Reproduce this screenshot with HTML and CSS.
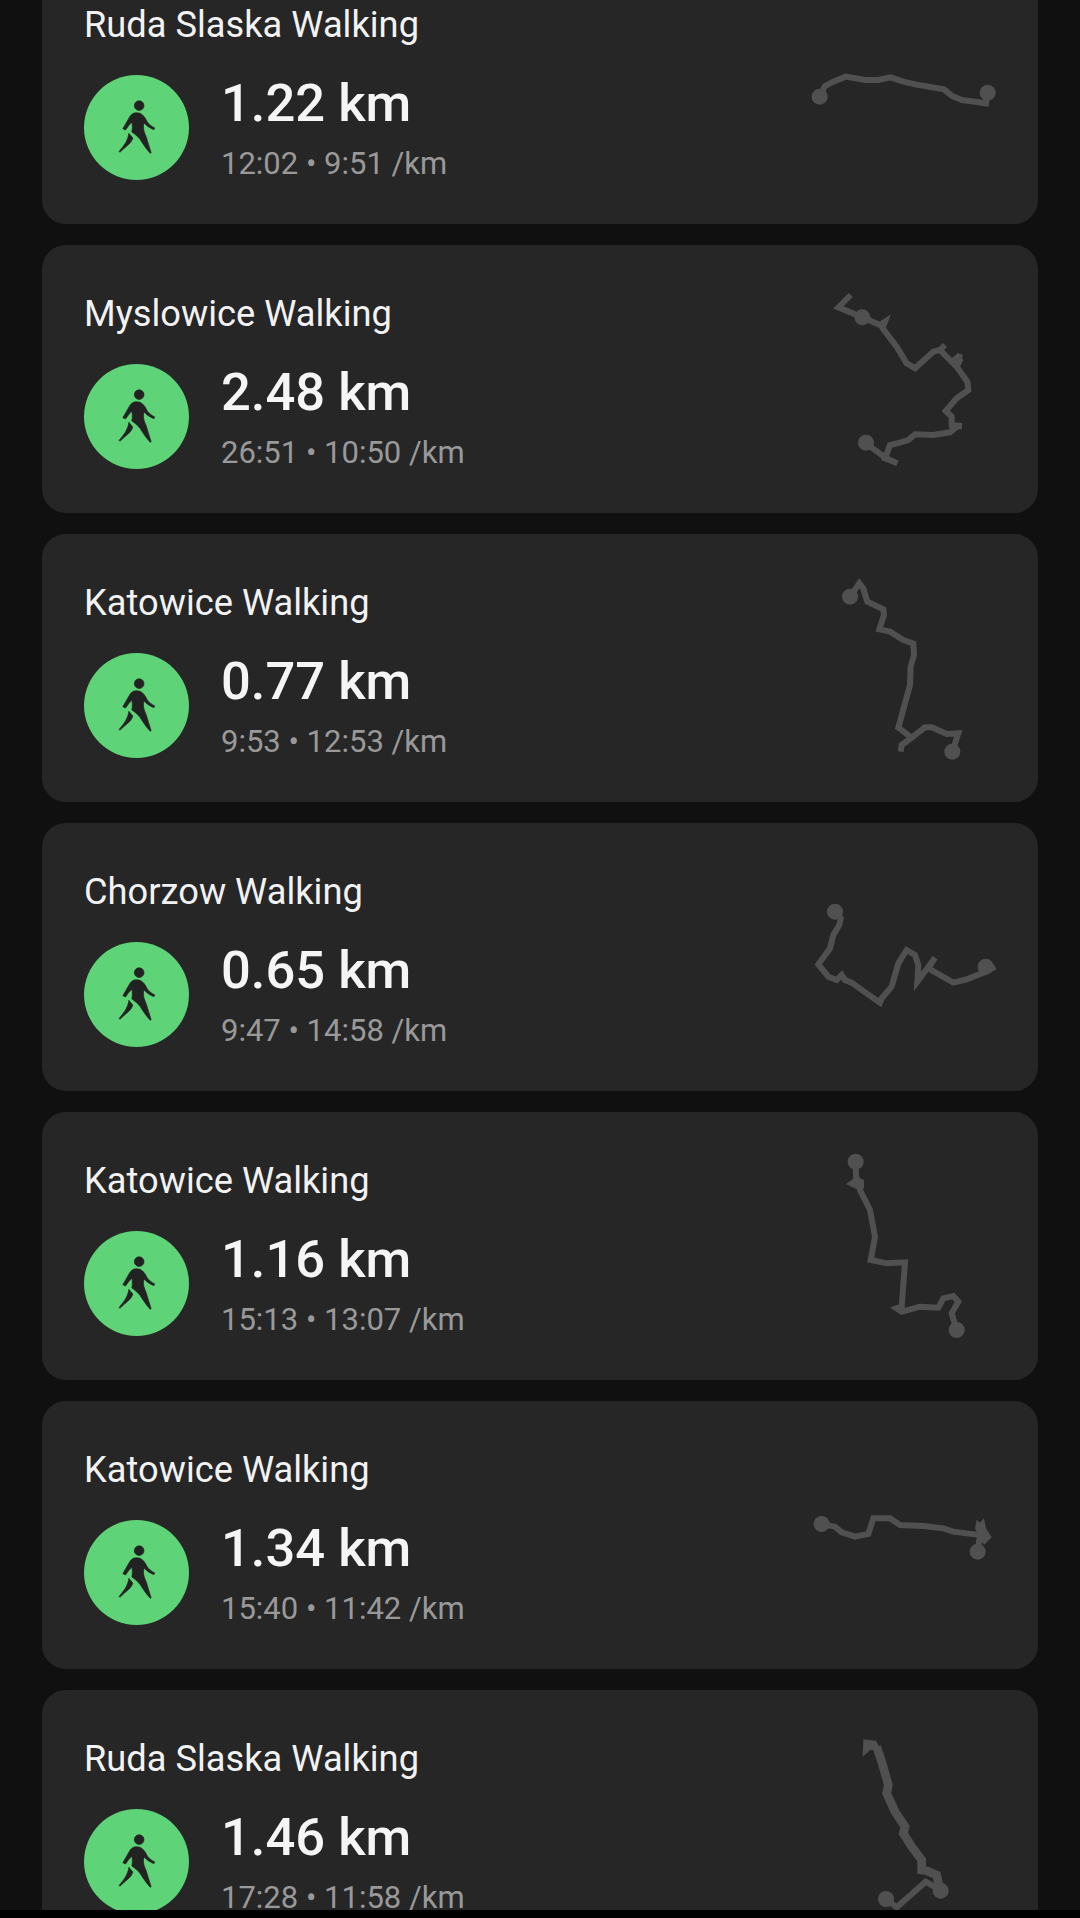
FILE: index.html
```html
<!DOCTYPE html>
<html lang="en">
<head>
<meta charset="utf-8">
<title>Walking activities</title>
<link rel="stylesheet" href="styles.css">
</head>
<body>
<svg class="defs" width="0" height="0" aria-hidden="true">
  <symbol id="walker" viewBox="4.5 -3 180 195">
    <circle cx="101" cy="29" r="14.5"/>
    <path d="M86 51C79 53 75 58 71 65C65 76 58 87 52 98L60 102C66 94 72 85 79 79C81 88 81 98 79 108C92 117 103 127 110 140C117 151 125 162 134 172L137 170C132 155 127 138 122 122C118 112 113 103 114 90C114 87 115 84 116 81C124 91 134 96 145 101L148 96C138 91 131 85 125 77C120 67 114 57 104 52C98 50 92 50 86 51Z"/>
    <path d="M70 112L82 126C80 133 76 139 71 144C62 152 52 160 43 169L41 166C48 158 54 150 60 141C65 132 69 122 70 112Z"/>
  </symbol>
</svg>
<main class="screen">
  <div class="list">
    <article class="card">
      <div class="info">
        <h2 class="title">Ruda Slaska Walking</h2>
        <div class="stats">
          <span class="badge"><svg class="walker"><use href="#walker"/></svg></span>
          <div class="numbers"><p class="distance">1.22 km</p><p class="meta">12:02 • 9:51 /km</p></div>
        </div>
      </div>
      <svg class="route" viewBox="60 -180 600 600">
        <polyline points="119,140 135,108 160,95 197,80 255,90 295,90 332,82 370,95 410,104 492,118 515,137 545,150 585,155 618,160 623,128"/>
        <circle cx="119" cy="140" r="24"/><circle cx="623" cy="128" r="24"/>
      </svg>
    </article>
    <article class="card">
      <div class="info">
        <h2 class="title">Myslowice Walking</h2>
        <div class="stats">
          <span class="badge"><svg class="walker"><use href="#walker"/></svg></span>
          <div class="numbers"><p class="distance">2.48 km</p><p class="meta">26:51 • 10:50 /km</p></div>
        </div>
      </div>
      <svg class="route" viewBox="60 687 600 600">
        <polyline points="258,1180 315,1222 352,1240 315,1225 330,1185 360,1178 385,1170 405,1153 460,1155 510,1147 530,1130 545,1128 515,1125 515,1100 497,1083 530,1045 565,1020 562,995 530,950 540,912 530,950 480,900 495,885 480,900 460,905 405,955 380,940 350,890 308,835 315,815 300,825 247,802 175,772 212,735"/>
        <polygon points="515,925 535,908 550,930 540,950 520,950"/>
        <circle cx="258" cy="1178" r="24"/><circle cx="247" cy="802" r="24"/>
      </svg>
    </article>
    <article class="card">
      <div class="info">
        <h2 class="title">Katowice Walking</h2>
        <div class="stats">
          <span class="badge"><svg class="walker"><use href="#walker"/></svg></span>
          <div class="numbers"><p class="distance">0.77 km</p><p class="meta">9:53 • 12:53 /km</p></div>
        </div>
      </div>
      <svg class="route" viewBox="60 24 600 600">
        <polyline points="210,110 238,70 250,85 262,125 310,148 312,165 298,208 330,215 370,240 400,250 402,285 392,320 390,375 355,503 395,533 365,555 362,575 365,555 395,533 435,502 455,502 500,522 535,520 517,575"/>
        <circle cx="210" cy="110" r="24"/><circle cx="517" cy="575" r="24"/>
      </svg>
    </article>
    <article class="card">
      <div class="info">
        <h2 class="title">Chorzow Walking</h2>
        <div class="stats">
          <span class="badge"><svg class="walker"><use href="#walker"/></svg></span>
          <div class="numbers"><p class="distance">0.65 km</p><p class="meta">9:47 • 14:58 /km</p></div>
        </div>
      </div>
      <svg class="route" viewBox="60 891 600 600">
        <polyline points="165,1055 182,1075 178,1095 160,1125 150,1165 115,1213 145,1250 170,1260 185,1245 195,1260 215,1268 260,1300 300,1328 305,1315 335,1280 355,1210 380,1170 405,1185 415,1215 412,1265 465,1193 445,1225 520,1268 560,1258 617,1235 645,1220"/>
        <circle cx="165" cy="1055" r="24"/><circle cx="617" cy="1220" r="24"/>
      </svg>
    </article>
    <article class="card">
      <div class="info">
        <h2 class="title">Katowice Walking</h2>
        <div class="stats">
          <span class="badge"><svg class="walker"><use href="#walker"/></svg></span>
          <div class="numbers"><p class="distance">1.16 km</p><p class="meta">15:13 • 13:07 /km</p></div>
        </div>
      </div>
      <svg class="route" viewBox="60 48 600 600">
        <polyline points="227,95 228,140 240,165 240,180 270,240 285,320 275,375 272,390 320,400 375,397 365,530 350,535 365,545 420,530 475,533 490,505 520,498 535,515 515,550 530,600"/>
        <polygon points="198,162 228,140 252,150 252,175 235,180"/>
        <circle cx="227" cy="95" r="24"/><circle cx="530" cy="600" r="24"/>
      </svg>
    </article>
    <article class="card">
      <div class="info">
        <h2 class="title">Katowice Walking</h2>
        <div class="stats">
          <span class="badge"><svg class="walker"><use href="#walker"/></svg></span>
          <div class="numbers"><p class="distance">1.34 km</p><p class="meta">15:40 • 11:42 /km</p></div>
        </div>
      </div>
      <svg class="route" viewBox="60 915 600 600">
        <polyline points="125,1182 165,1190 185,1207 225,1220 265,1212 280,1165 330,1165 360,1185 430,1188 490,1195 520,1205 600,1215 593,1265"/>
        <polygon points="585,1195 590,1170 600,1178 612,1165 618,1195 635,1222 612,1245 600,1225"/>
        <circle cx="125" cy="1182" r="24"/><circle cx="593" cy="1265" r="24"/>
      </svg>
    </article>
    <article class="card">
      <div class="info">
        <h2 class="title">Ruda Slaska Walking</h2>
        <div class="stats">
          <span class="badge"><svg class="walker"><use href="#walker"/></svg></span>
          <div class="numbers"><p class="distance">1.46 km</p><p class="meta">17:28 • 11:58 /km</p></div>
        </div>
      </div>
      <svg class="route" viewBox="60 72 600 600">
        <polyline points="318,597 350,622 437,545 480,570"/>
        <polyline class="thick" points="480,570 470,525 440,512 425,510 425,480 395,440 370,400 375,380 345,335 320,280 325,255 305,185 290,140"/>
        <polygon points="250,118 288,122 302,150 270,150 248,170"/>
        <circle cx="318" cy="597" r="24"/><circle cx="482" cy="572" r="24"/>
      </svg>
    </article>
  </div>
</main>
<div class="nav-strip"></div>
</body>
</html>
```
FILE: styles.css
```css
* {
  box-sizing: border-box;
}

html,
body {
  margin: 0;
  padding: 0;
  height: 1918px;
  overflow: hidden;
  background: #000;
}

body {
  display: flex;
  flex-direction: column;
  font-family: Roboto, "Liberation Sans", sans-serif;
}

.defs {
  position: absolute;
}

.screen {
  height: 1910px;
  overflow: hidden;
  background: #101010;
}

.nav-strip {
  height: 8px;
  background: #000;
}

.list {
  display: flex;
  flex-direction: column;
  gap: 21px;
  margin: -44px 42px 0;
}

.card {
  display: flex;
  flex: none;
  align-items: center;
  justify-content: space-between;
  height: 268px;
  padding: 0 38px 0 42px;
  border-radius: 24px;
  background: #262626;
}

.info {
  padding: 47.5px 0 44px;
}

.title {
  margin: 0;
  font-size: 36.25px;
  font-weight: 400;
  line-height: 42px;
  color: #f2f2f2;
}

.stats {
  display: flex;
  align-items: flex-start;
  gap: 32px;
  height: 105px;
  margin-top: 29.5px;
}

.badge {
  display: flex;
  flex: none;
  align-items: center;
  justify-content: center;
  width: 105px;
  height: 105px;
  border-radius: 50%;
  background: #5fd377;
}

.walker {
  width: 60px;
  height: 65px;
  fill: #222;
  stroke: #222;
  stroke-width: 2;
}

.numbers .distance {
  margin: -4.5px 0 0;
  font-size: 52.5px;
  font-weight: 500;
  line-height: 64px;
  color: #f5f5f5;
}

.numbers .meta {
  margin: 10.3px 0 0;
  font-size: 31px;
  line-height: 38px;
  color: #999;
}

.route {
  flex: none;
  width: 200px;
  height: 200px;
  overflow: visible;
}

.route polyline {
  fill: none;
  stroke: #505050;
  stroke-width: 18;
  stroke-linejoin: miter;
}

.route .thick {
  stroke-width: 26;
}

.route circle,
.route polygon {
  fill: #505050;
}
```
